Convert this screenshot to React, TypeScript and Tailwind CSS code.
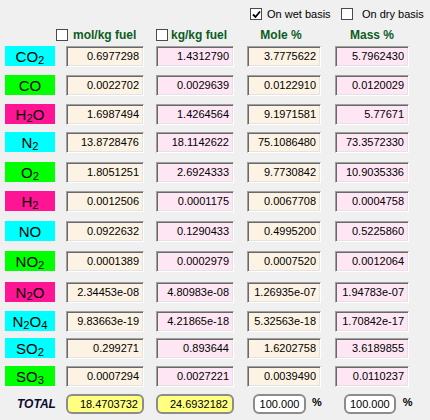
import React from 'react';

type Row = {
  name: React.ReactNode;
  color: string;
  mt: string;
  vals: [string, string, string, string];
};

const rows: Row[] = [
  { name: <>CO<sub>2</sub></>, color: 'bg-[#00ffff]', mt: 'mt-[5px]', vals: ['0.6977298', '1.4312790', '3.7775622', '5.7962430'] },
  { name: <>CO</>, color: 'bg-[#00ff00]', mt: 'mt-[8px]', vals: ['0.0022702', '0.0029639', '0.0122910', '0.0120029'] },
  { name: <>H<sub>2</sub>O</>, color: 'bg-[#ff1493]', mt: 'mt-[8px]', vals: ['1.6987494', '1.4264564', '9.1971581', '5.77671'] },
  { name: <>N<sub>2</sub></>, color: 'bg-[#00ffff]', mt: 'mt-[7px]', vals: ['13.8728476', '18.1142622', '75.1086480', '73.3572330'] },
  { name: <>O<sub>2</sub></>, color: 'bg-[#00ff00]', mt: 'mt-[9px]', vals: ['1.8051251', '2.6924333', '9.7730842', '10.9035336'] },
  { name: <>H<sub>2</sub></>, color: 'bg-[#ff1493]', mt: 'mt-[8px]', vals: ['0.0012506', '0.0001175', '0.0067708', '0.0004758'] },
  { name: <>NO</>, color: 'bg-[#00ffff]', mt: 'mt-[9px]', vals: ['0.0922632', '0.1290433', '0.4995200', '0.5225860'] },
  { name: <>NO<sub>2</sub></>, color: 'bg-[#00ff00]', mt: 'mt-[9px]', vals: ['0.0001389', '0.0002979', '0.0007520', '0.0012064'] },
  { name: <>N<sub>2</sub>O</>, color: 'bg-[#ff1493]', mt: 'mt-[10px]', vals: ['2.34453e-08', '4.80983e-08', '1.26935e-07', '1.94783e-07'] },
  { name: <>N<sub>2</sub>O<sub>4</sub></>, color: 'bg-[#00ffff]', mt: 'mt-[8px]', vals: ['9.83663e-19', '4.21865e-18', '5.32563e-18', '1.70842e-17'] },
  { name: <>SO<sub>2</sub></>, color: 'bg-[#00ffff]', mt: 'mt-[6px]', vals: ['0.299271', '0.893644', '1.6202758', '3.6189855'] },
  { name: <>SO<sub>3</sub></>, color: 'bg-[#00ff00]', mt: 'mt-[7px]', vals: ['0.0007294', '0.0027221', '0.0039490', '0.0110237'] },
];

const sunken =
  'h-[21px] flex items-center justify-end pr-[4px] text-[11px] text-black border border-t-[#a0a0a0] border-l-[#a0a0a0] border-b-white border-r-white shadow-[inset_1px_1px_0_#696969,inset_-1px_-1px_0_#e3e3e3]';

function CheckBox({ checked }: { checked?: boolean }) {
  return (
    <div className="w-[12px] h-[12px] shrink-0 bg-white border border-[#4a4a4a] flex items-center justify-center">
      {checked && (
        <svg width="9" height="9" viewBox="0 0 9 9">
          <polyline points="1,4.5 3.5,7 8,1.5" fill="none" stroke="#000" strokeWidth="1.8" />
        </svg>
      )}
    </div>
  );
}

export default function App() {
  return (
    <div className="w-[430px] h-[420px] bg-[#f0f0f0] overflow-hidden font-['Liberation_Sans',Arial,sans-serif] leading-none">
      {/* Basis options */}
      <div className="flex items-center h-[12px] mt-[8px] pl-[250px]">
        <div className="w-[91px] flex items-center gap-[5px]">
          <CheckBox checked />
          <span className="text-[11px] text-black">On wet basis</span>
        </div>
        <div className="flex items-center gap-[9px]">
          <CheckBox />
          <span className="text-[11px] text-black">On dry basis</span>
        </div>
      </div>

      {/* Column headers */}
      <div className="flex items-center h-[13px] mt-[8px] text-[12px] font-bold text-[#0b5d1e]">
        <div className="ml-[56px] w-[100px] flex items-center gap-[5px]">
          <CheckBox />
          <span>mol/kg fuel</span>
        </div>
        <div className="w-[91px] flex items-center gap-[3px]">
          <CheckBox />
          <span>kg/kg fuel</span>
        </div>
        <div className="w-[74px] text-center pr-[6px]">Mole %</div>
        <div className="ml-[14px] w-[74px] text-center">Mass %</div>
      </div>

      {/* Species rows */}
      {rows.map((r, i) => (
        <div key={i} className={`flex items-start ${r.mt}`}>
          <div className={`ml-[5px] w-[50px] h-[20px] flex items-center justify-center text-[15px] text-black ${r.color}`}>
            <span>{r.name}</span>
          </div>
          <div className={`ml-[11px] w-[78px] bg-[#fdf3e4] ${sunken}`}>{r.vals[0]}</div>
          <div className={`ml-[12px] w-[78px] bg-[#ffe6f5] ${sunken}`}>{r.vals[1]}</div>
          <div className={`ml-[13px] w-[74px] bg-[#fdf3e4] ${sunken}`}>{r.vals[2]}</div>
          <div className={`ml-[14px] w-[74px] bg-[#ffe6f5] ${sunken}`}>{r.vals[3]}</div>
        </div>
      ))}

      {/* Totals */}
      <div className="flex items-center mt-[7px] h-[20px]">
        <div className="w-[66px] pl-[17px] text-[12px] font-bold italic text-[#0a0a30]">TOTAL</div>
        <div className="w-[78px] h-[20px] rounded-[6px] border-2 border-[#8c8c8c] bg-[#ffff80] flex items-center justify-end pr-[4px] text-[11px]">
          18.4703732
        </div>
        <div className="ml-[12px] w-[78px] h-[20px] rounded-[6px] border-2 border-[#8c8c8c] bg-[#ffff80] flex items-center justify-end pr-[4px] text-[11px]">
          24.6932182
        </div>
        <div className="ml-[19px] w-[53px] h-[20px] rounded-[6px] border-2 border-[#8c8c8c] bg-white flex items-center justify-center text-[11px]">
          100.000
        </div>
        <span className="ml-[6px] text-[11px] font-bold -mt-[4px]">%</span>
        <div className="ml-[22px] w-[52px] h-[20px] rounded-[6px] border-2 border-[#8c8c8c] bg-white flex items-center justify-center text-[11px]">
          100.000
        </div>
        <span className="ml-[7px] text-[11px] font-bold -mt-[4px]">%</span>
      </div>
    </div>
  );
}
